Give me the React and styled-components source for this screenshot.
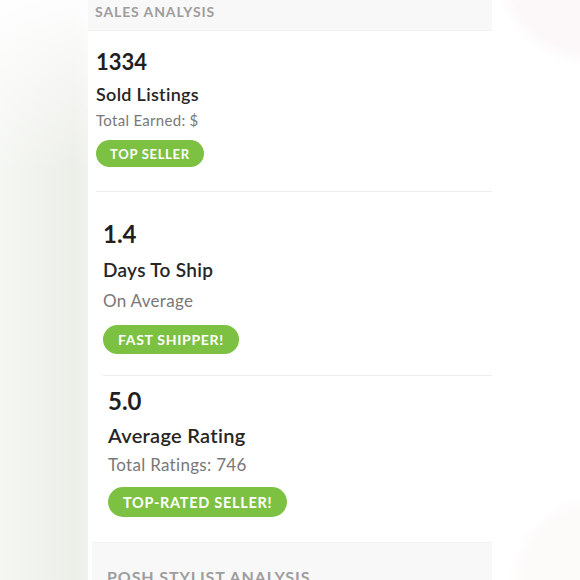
import React from 'react'
import styled, { createGlobalStyle } from 'styled-components'

const GlobalStyle = createGlobalStyle`
  html, body {
    margin: 0;
    padding: 0;
    background: #fff;
  }
  body {
    font-family: Lato, "Liberation Sans", sans-serif;
    -webkit-font-smoothing: antialiased;
  }
`

const Page = styled.div`
  display: flex;
  width: 580px;
  height: 580px;
  overflow: hidden;
`

const LeftShade = styled.div`
  width: 88px;
  flex-shrink: 0;
  background:
    linear-gradient(to bottom, rgba(255, 255, 255, 0.9) 0%, rgba(255, 255, 255, 0) 30%),
    linear-gradient(to right, #f5f7f3 0%, #eceee8 85%, #f0f2ed 100%);
`

const RightShade = styled.div`
  flex: 1;
  background:
    radial-gradient(circle at 110% -5%, #fcf8f9 0, #fcf8f9 80px, rgba(255, 255, 255, 0) 95px),
    radial-gradient(circle at 115% 100%, #fdfafa 0, #fdfafa 70px, rgba(255, 255, 255, 0) 85px),
    #fff;
`

const Panel = styled.div`
  width: 404px;
  flex-shrink: 0;
  background: #fff;
  display: flex;
  flex-direction: column;

  & > * {
    flex-shrink: 0;
  }
`

const Band = styled.div`
  background: #f9f8f8;
  height: ${(p) => p.$height}px;
  margin-left: ${(p) => p.$indent || 0}px;
  padding-left: ${(p) => p.$pad}px;
  padding-top: ${(p) => p.$top}px;
  box-sizing: border-box;
  border-top: ${(p) => (p.$line ? '1px solid #f2f1f1' : 'none')};
  border-bottom: ${(p) => (p.$line ? 'none' : '1px solid #f2f1f1')};
`

const BandTitle = styled.div`
  font-size: ${(p) => p.$size}px;
  line-height: 20px;
  color: #9d9d9d;
  font-weight: 700;
  letter-spacing: 0.9px;
  text-transform: uppercase;
`

const Section = styled.div`
  display: flex;
  flex-direction: column;
  align-items: flex-start;
  margin-left: ${(p) => p.$indent}px;
  padding-top: ${(p) => p.$top}px;
  padding-bottom: ${(p) => p.$bottom}px;
  border-bottom: ${(p) => (p.$divider ? '1px solid #eeeeee' : 'none')};
`

const Stat = styled.div`
  font-size: ${(p) => p.$size}px;
  line-height: 28px;
  font-weight: 700;
  color: #1f1f1f;
`

const Label = styled.div`
  margin-top: ${(p) => p.$gap}px;
  font-size: ${(p) => p.$size}px;
  line-height: 26px;
  font-weight: 600;
  color: #262626;
  letter-spacing: 0.3px;
`

const Sub = styled.div`
  margin-top: ${(p) => p.$gap}px;
  font-size: ${(p) => p.$size}px;
  line-height: 22px;
  color: #787878;
  letter-spacing: 0.3px;
`

const Badge = styled.span`
  margin-top: ${(p) => p.$gap}px;
  height: ${(p) => p.$height}px;
  padding: 0 ${(p) => p.$pad}px;
  display: inline-flex;
  align-items: center;
  border-radius: 16px;
  background: #7dc143;
  color: #fff;
  font-size: ${(p) => p.$size}px;
  font-weight: 700;
  letter-spacing: 0.7px;
  white-space: nowrap;
`

const stats = [
  {
    value: '1334',
    label: 'Sold Listings',
    sub: 'Total Earned: $',
    badge: 'TOP SELLER',
    indent: 8,
    top: 17,
    bottom: 24,
    sizes: [22, 18, 15, 13],
    gaps: [5, 2, 9],
    badgeHeight: 27,
    badgePad: 14,
    divider: true,
  },
  {
    value: '1.4',
    label: 'Days To Ship',
    sub: 'On Average',
    badge: 'FAST SHIPPER!',
    indent: 15,
    top: 28,
    bottom: 21,
    sizes: [24, 19, 17, 14],
    gaps: [9, 7, 13],
    badgeHeight: 29,
    badgePad: 15,
    divider: true,
  },
  {
    value: '5.0',
    label: 'Average Rating',
    sub: 'Total Ratings: 746',
    badge: 'TOP-RATED SELLER!',
    indent: 20,
    top: 11,
    bottom: 25,
    sizes: [24, 20, 17, 14.5],
    gaps: [7, 6, 11],
    badgeHeight: 30,
    badgePad: 15,
    divider: false,
  },
]

const App = () => {
  return (
    <>
      <GlobalStyle />
      <Page>
        <LeftShade />
        <Panel>
          <Band $height={31} $pad={7} $top={2}>
            <BandTitle $size={14}>Sales Analysis</BandTitle>
          </Band>
          {stats.map((s) => (
            <Section
              key={s.label}
              $indent={s.indent}
              $top={s.top}
              $bottom={s.bottom}
              $divider={s.divider}
            >
              <Stat $size={s.sizes[0]}>{s.value}</Stat>
              <Label $gap={s.gaps[0]} $size={s.sizes[1]}>
                {s.label}
              </Label>
              <Sub $gap={s.gaps[1]} $size={s.sizes[2]}>
                {s.sub}
              </Sub>
              <Badge
                $gap={s.gaps[2]}
                $size={s.sizes[3]}
                $height={s.badgeHeight}
                $pad={s.badgePad}
              >
                {s.badge}
              </Badge>
            </Section>
          ))}
          <Band $height={60} $indent={4} $pad={15} $top={24} $line>
            <BandTitle $size={16}>Posh Stylist Analysis</BandTitle>
          </Band>
        </Panel>
        <RightShade />
      </Page>
    </>
  )
}

export default App
